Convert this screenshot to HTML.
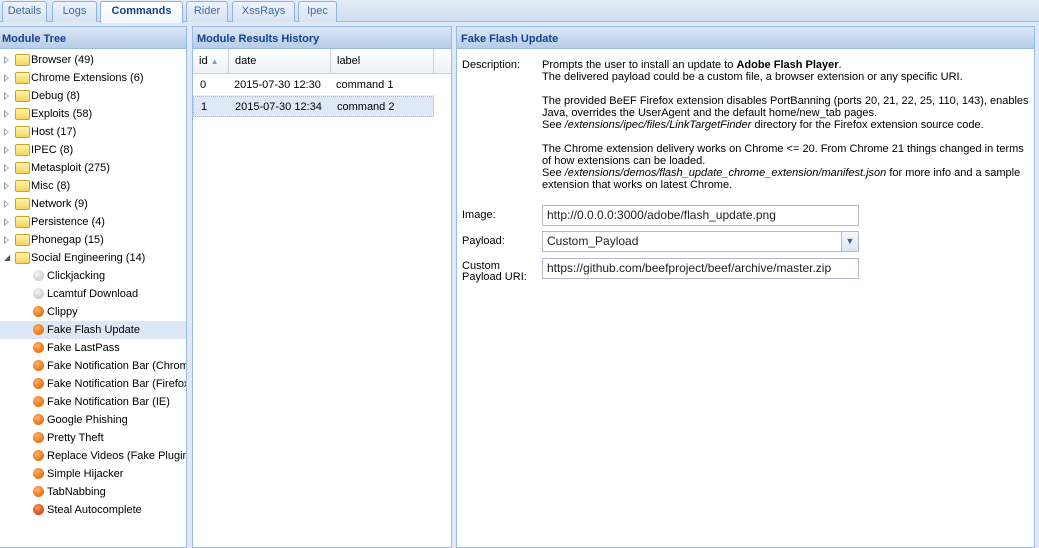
<!DOCTYPE html>
<html><head><style>
*{margin:0;padding:0;box-sizing:border-box}
body{width:1039px;height:548px;overflow:hidden;background:#dfe8f6;font-family:"Liberation Sans",sans-serif;font-size:11px;color:#000;position:relative}
.tabbar{position:absolute;left:0;top:0;width:1039px;height:22px;background:linear-gradient(#e4ecf7,#d0def0);border-bottom:1px solid #99bbe8}
.tab{position:absolute;top:1px;height:21px;border:1px solid #8db2e3;border-bottom:none;border-radius:3px 3px 0 0;background:linear-gradient(#eef3fa,#d7e3f3);color:#416aa3;font-size:11px;text-align:center;line-height:19px}
.tab.act{color:#15428b;font-weight:bold;height:22px;background:linear-gradient(#fff,#f2f6fb)}
.panel{position:absolute;top:26px;bottom:0;background:#fff;border:1px solid #99bbe8}
.hdr{height:22px;background:linear-gradient(#dae6f4,#c5d6ee 60%,#b8cde9);border-bottom:1px solid #99bbe8;color:#15428b;font-weight:bold;font-size:11px;line-height:24px;padding-left:4px}
.row{position:absolute;height:18px;line-height:18px;white-space:nowrap}
.tri{position:absolute;left:4px;top:5px;width:0;height:0;border-left:5px solid #999;border-top:4px solid transparent;border-bottom:4px solid transparent}
.tri:after{content:"";position:absolute;left:-4px;top:-2px;border-left:3px solid #fff;border-top:2px solid transparent;border-bottom:2px solid transparent}
.fold{position:absolute;left:15px;top:3px;width:15px;height:12px;background:linear-gradient(#fff3b0,#f5d45a);border:1px solid #c9a227;border-radius:2px}
.dot{position:absolute;left:33px;top:3px;width:11px;height:11px;border-radius:50%}
.o{background:radial-gradient(circle at 40% 35%,#ffb070,#ec7a20 60%,#d06010)}
.g{background:radial-gradient(circle at 40% 35%,#f4f4f4,#cfcfcf 70%,#b8b8b8)}
.r{background:radial-gradient(circle at 40% 35%,#ff9a70,#e0501c 60%,#c03a10)}
.lbl{position:absolute;left:31px}
.lbl2{position:absolute;left:47px}
.gh{position:absolute;top:22px;left:0;right:0;height:25px;background:linear-gradient(#fff,#eef2f7);border-bottom:1px solid #d0d0d0}
.gh div{position:absolute;top:0;height:25px;line-height:25px;padding-left:6px;border-right:1px solid #d0d0d0}
.gr{position:absolute;left:0;width:241px;height:21px;line-height:21px;border-bottom:1px solid #ededed}
.gr span{position:absolute}
.f{position:absolute;left:4px;color:#000}
.inp{position:absolute;left:85px;height:21px;border:1px solid #b5b8c8;background:#fff;font-size:12px;line-height:19px;padding-left:4px;color:#222}
</style></head><body>
<div class="tabbar"></div>
<div class="tab" style="left:2px;width:45px">Details</div>
<div class="tab" style="left:52px;width:45px">Logs</div>
<div class="tab act" style="left:100px;width:83px">Commands</div>
<div class="tab" style="left:186px;width:42px">Rider</div>
<div class="tab" style="left:232px;width:63px">XssRays</div>
<div class="tab" style="left:298px;width:39px">Ipec</div>

<div class="panel" style="left:0;width:187px;border-left:none">
<div class="hdr" style="padding-left:2px">Module Tree</div>
<div style="position:absolute;top:22px;left:0;right:0;bottom:0">
<div class="row" style="top:2px;width:100%"><i class="tri"></i><i class="fold"></i><span class="lbl">Browser (49)</span></div>
<div class="row" style="top:20px;width:100%"><i class="tri"></i><i class="fold"></i><span class="lbl">Chrome Extensions (6)</span></div>
<div class="row" style="top:38px;width:100%"><i class="tri"></i><i class="fold"></i><span class="lbl">Debug (8)</span></div>
<div class="row" style="top:56px;width:100%"><i class="tri"></i><i class="fold"></i><span class="lbl">Exploits (58)</span></div>
<div class="row" style="top:74px;width:100%"><i class="tri"></i><i class="fold"></i><span class="lbl">Host (17)</span></div>
<div class="row" style="top:92px;width:100%"><i class="tri"></i><i class="fold"></i><span class="lbl">IPEC (8)</span></div>
<div class="row" style="top:110px;width:100%"><i class="tri"></i><i class="fold"></i><span class="lbl">Metasploit (275)</span></div>
<div class="row" style="top:128px;width:100%"><i class="tri"></i><i class="fold"></i><span class="lbl">Misc (8)</span></div>
<div class="row" style="top:146px;width:100%"><i class="tri"></i><i class="fold"></i><span class="lbl">Network (9)</span></div>
<div class="row" style="top:164px;width:100%"><i class="tri"></i><i class="fold"></i><span class="lbl">Persistence (4)</span></div>
<div class="row" style="top:182px;width:100%"><i class="tri"></i><i class="fold"></i><span class="lbl">Phonegap (15)</span></div>
<div class="row" style="top:200px;width:100%"><span style="position:absolute;left:4px;top:0;font-size:8px;color:#555">◢</span><i class="fold"></i><span class="lbl">Social Engineering (14)</span></div>
<div class="row" style="top:218px;width:100%"><i class="dot g"></i><span class="lbl2">Clickjacking</span></div>
<div class="row" style="top:236px;width:100%"><i class="dot g"></i><span class="lbl2">Lcamtuf Download</span></div>
<div class="row" style="top:254px;width:100%"><i class="dot o"></i><span class="lbl2">Clippy</span></div>
<div class="row" style="top:272px;width:100%;background:#dde8f6"><i class="dot o"></i><span class="lbl2">Fake Flash Update</span></div>
<div class="row" style="top:290px;width:100%"><i class="dot o"></i><span class="lbl2">Fake LastPass</span></div>
<div class="row" style="top:308px;width:100%;overflow:hidden"><i class="dot o"></i><span class="lbl2">Fake Notification Bar (Chrome)</span></div>
<div class="row" style="top:326px;width:100%;overflow:hidden"><i class="dot o"></i><span class="lbl2">Fake Notification Bar (Firefox)</span></div>
<div class="row" style="top:344px;width:100%"><i class="dot o"></i><span class="lbl2">Fake Notification Bar (IE)</span></div>
<div class="row" style="top:362px;width:100%"><i class="dot o"></i><span class="lbl2">Google Phishing</span></div>
<div class="row" style="top:380px;width:100%"><i class="dot o"></i><span class="lbl2">Pretty Theft</span></div>
<div class="row" style="top:398px;width:100%;overflow:hidden"><i class="dot o"></i><span class="lbl2">Replace Videos (Fake Plugin)</span></div>
<div class="row" style="top:416px;width:100%"><i class="dot o"></i><span class="lbl2">Simple Hijacker</span></div>
<div class="row" style="top:434px;width:100%"><i class="dot o"></i><span class="lbl2">TabNabbing</span></div>
<div class="row" style="top:452px;width:100%"><i class="dot r"></i><span class="lbl2">Steal Autocomplete</span></div>
</div>
</div>

<div class="panel" style="left:192px;width:260px">
<div class="hdr">Module Results History</div>
<div class="gh"><div style="left:0;width:36px">id <span style="color:#7a9ccc;font-size:8px">▲</span></div><div style="left:36px;width:102px">date</div><div style="left:138px;width:103px">label</div></div>
<div class="gr" style="top:48px"><span style="left:7px">0</span><span style="left:41px">2015-07-30 12:30</span><span style="left:143px">command 1</span></div>
<div class="gr" style="top:69px;background:#dfe8f6;border:1px dotted #a3bae9"><span style="left:7px">1</span><span style="left:41px">2015-07-30 12:34</span><span style="left:143px">command 2</span></div>
</div>

<div class="panel" style="left:456px;width:579px">
<div class="hdr">Fake Flash Update</div>
<div class="f" style="top:32px;left:5px">Description:</div>
<div style="position:absolute;top:32px;left:85px;width:490px;line-height:12px">
Prompts the user to install an update to <b>Adobe Flash Player</b>.<br>The delivered payload could be a custom file, a browser extension or any specific URI.<br><br>The provided BeEF Firefox extension disables PortBanning (ports 20, 21, 22, 25, 110, 143), enables Java, overrides the UserAgent and the default home/new_tab pages.<br>See <i>/extensions/ipec/files/LinkTargetFinder</i> directory for the Firefox extension source code.<br><br>The Chrome extension delivery works on Chrome &lt;= 20. From Chrome 21 things changed in terms of how extensions can be loaded.<br>See <i>/extensions/demos/flash_update_chrome_extension/manifest.json</i> for more info and a sample extension that works on latest Chrome.
</div>
<div class="f" style="top:182px;left:5px">Image:</div>
<div class="inp" style="top:178px;width:317px">http://0.0.0.0:3000/adobe/flash_update.png</div>
<div class="f" style="top:208px;left:5px">Payload:</div>
<div class="inp" style="top:204px;width:317px">Custom_Payload<span style="position:absolute;right:0;top:0;width:17px;height:19px;background:linear-gradient(#f4f8fd,#dbe5f3);border-left:1px solid #b5b8c8;color:#3c5f95;font-size:9px;text-align:center;line-height:19px">▼</span></div>
<div class="f" style="top:234px;left:5px;line-height:11px">Custom<br>Payload URI:</div>
<div class="inp" style="top:231px;width:317px">https://github.com/beefproject/beef/archive/master.zip</div>
</div>
</body></html>
